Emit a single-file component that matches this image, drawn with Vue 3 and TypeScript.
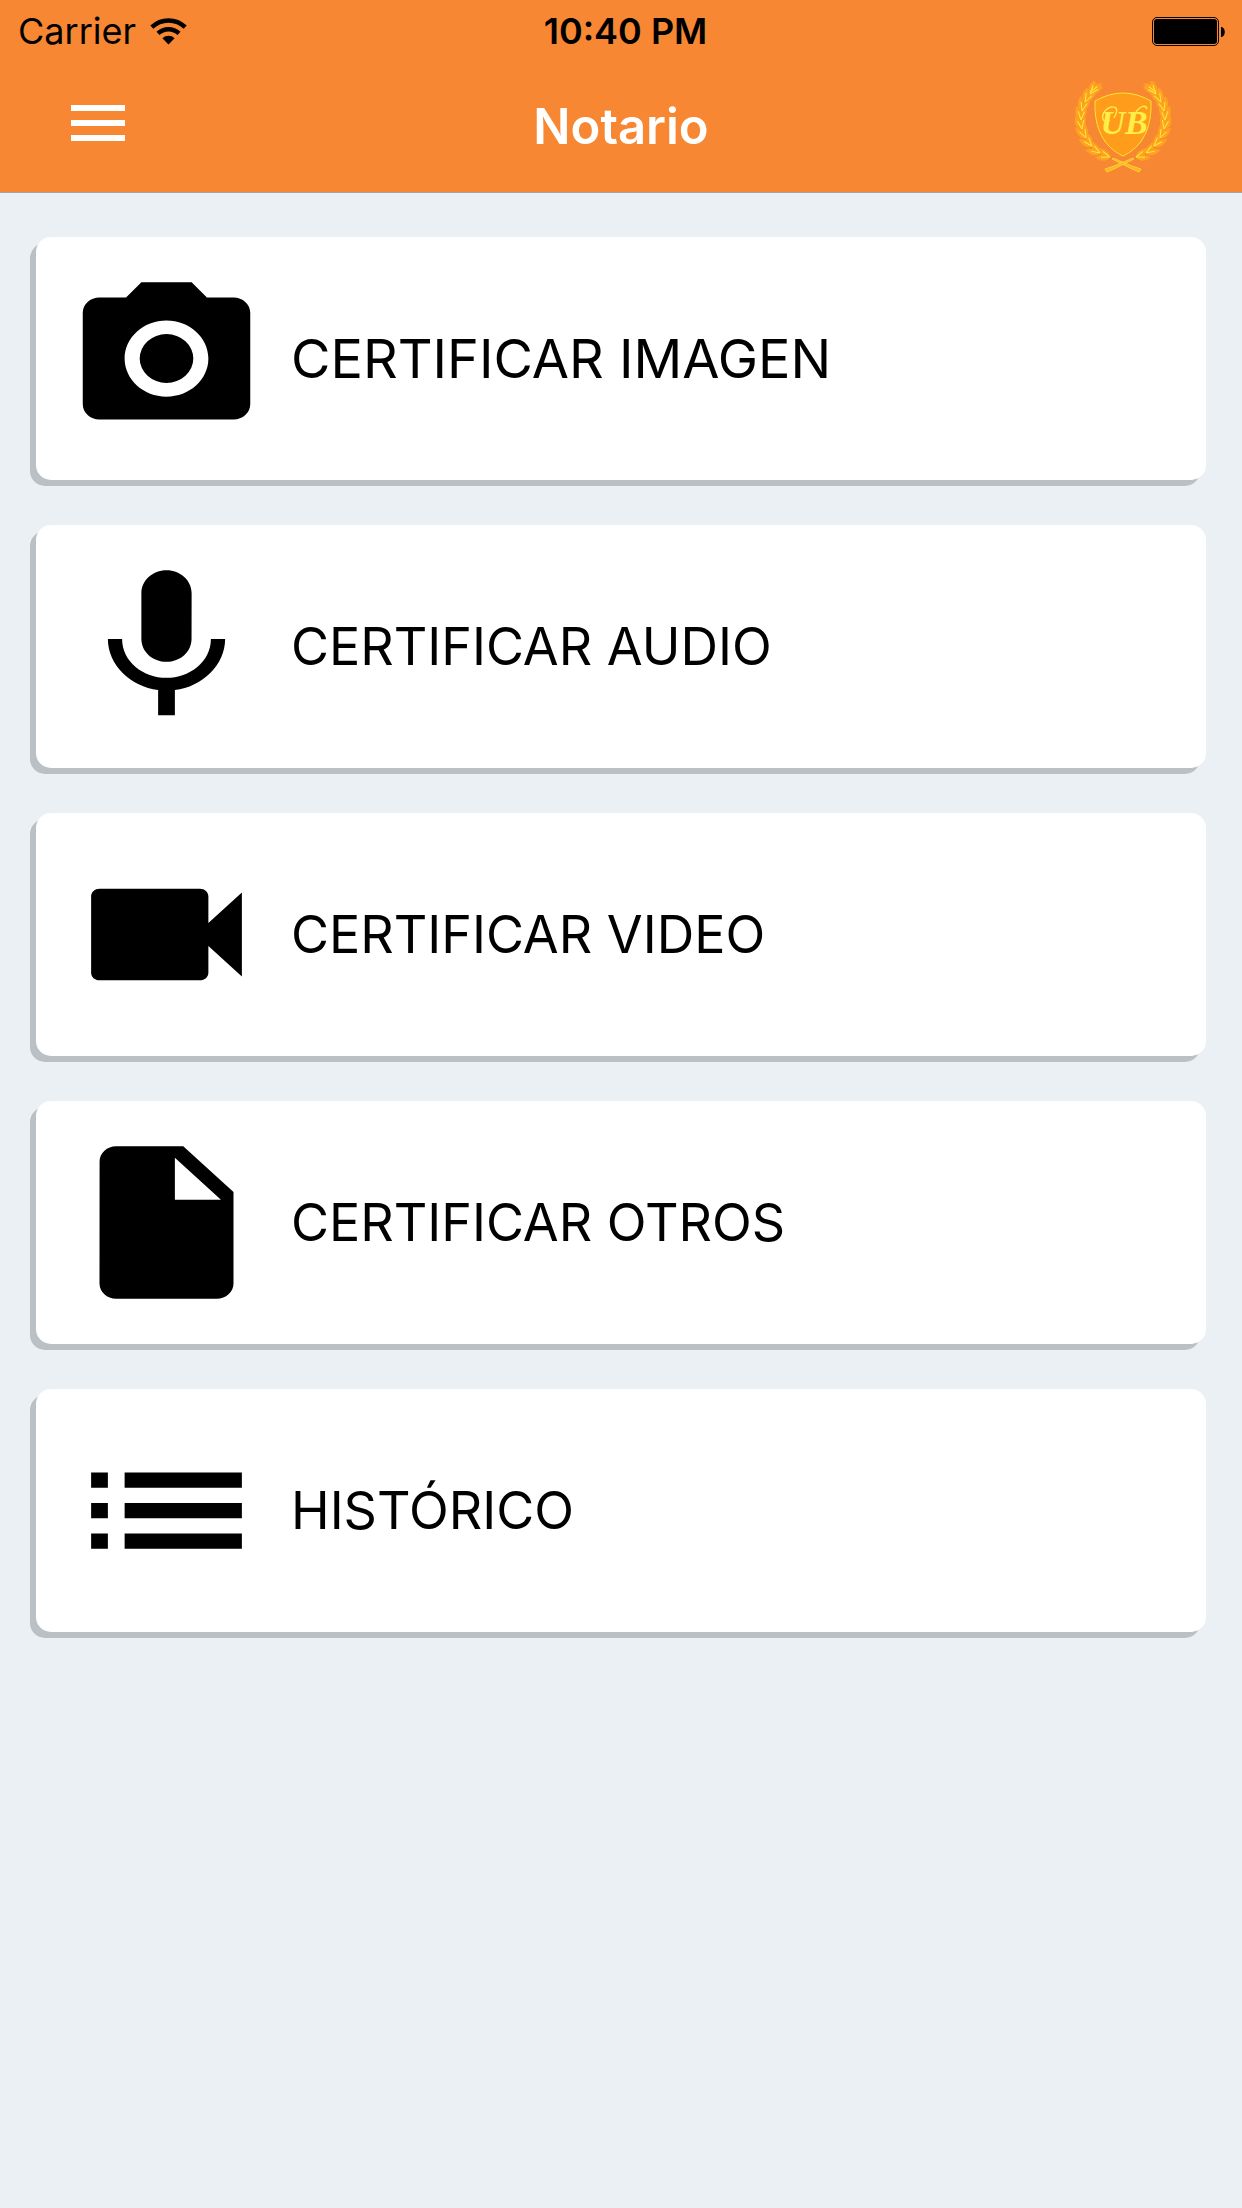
<script setup lang="ts">
interface MenuEntry {
  label: string
  icon: string
  large?: boolean
}

interface Leaf {
  x: number
  y: number
  angle: number
}

const entries: MenuEntry[] = [
  {
    label: 'CERTIFICAR IMAGEN',
    large: true,
    icon: 'M9 2L7.17 4H4c-1.1 0-2 .9-2 2v12c0 1.1.9 2 2 2h16c1.1 0 2-.9 2-2V6c0-1.1-.9-2-2-2h-3.17L15 2H9zm3 15c-2.76 0-5-2.24-5-5s2.24-5 5-5 5 2.24 5 5-2.24 5-5 5zm0-8.2a3.2 3.2 0 1 0 0 6.4a3.2 3.2 0 1 0 0-6.4z',
  },
  {
    label: 'CERTIFICAR AUDIO',
    icon: 'M12 14c1.66 0 2.99-1.34 2.99-3L15 5c0-1.66-1.34-3-3-3S9 3.34 9 5v6c0 1.66 1.34 3 3 3zm5.3-3c0 3-2.54 5.1-5.3 5.1S6.7 14 6.7 11H5c0 3.41 2.72 6.23 6 6.72V21h2v-3.28c3.28-.48 6-3.3 6-6.72h-1.7z',
  },
  {
    label: 'CERTIFICAR VIDEO',
    icon: 'M17 10.5V7c0-.55-.45-1-1-1H4c-.55 0-1 .45-1 1v10c0 .55.45 1 1 1h12c.55 0 1-.45 1-1v-3.5l4 4v-11l-4 4z',
  },
  {
    label: 'CERTIFICAR OTROS',
    icon: 'M6 2c-1.1 0-1.99.9-1.99 2L4 20c0 1.1.89 2 1.99 2H18c1.1 0 2-.9 2-2V8l-6-6H6zm7 7V3.5L18.5 9H13z',
  },
  {
    label: 'HISTÓRICO',
    icon: 'M3 13h2v-2H3v2zm0 4h2v-2H3v2zm0-8h2V7H3v2zm4 4h14v-2H7v2zm0 4h14v-2H7v2zM7 7v2h14V7H7z',
  },
]

// Stem of one laurel branch, from its tip down to the knot: x, y, direction of growth
const stem: [number, number, number][] = [
  [15, 13, -50],
  [10, 21, -62],
  [7, 30, -76],
  [6, 39, -88],
  [7, 48, -100],
  [11, 57, -116],
  [17, 65, -132],
  [25, 72, -148],
  [35, 76, -162],
]

const leaves: Leaf[] = stem.flatMap(([x, y, a]) => [
  { x, y, angle: a - 20 },
  { x, y, angle: a + 20 },
])
leaves.push({ x: 15, y: 11, angle: -36 })
</script>

<template>
  <div class="screen">
    <header class="top">
      <div class="status">
        <div class="carrier">
          <span>Carrier</span>
          <svg class="wifi" viewBox="0 0 37 27" aria-hidden="true">
            <path d="M1.8 9.2a24 24 0 0 1 33.4 0" fill="none" stroke="#000" stroke-width="4.4" />
            <path d="M8 15.4a15.2 15.2 0 0 1 21 0" fill="none" stroke="#000" stroke-width="4.4" />
            <path d="M12.4 20.3a8.8 8.8 0 0 1 12.2 0L18.5 26.6z" />
          </svg>
        </div>
        <time class="clock">10:40 PM</time>
        <svg class="battery" viewBox="0 0 73 29" aria-hidden="true">
          <rect x="0.5" y="0.5" width="66" height="28" rx="4.5" fill="none" stroke="#000" />
          <rect x="2" y="2" width="63" height="25" rx="3" />
          <path d="M69 10c5 0 5 10 0 10z" />
        </svg>
      </div>
      <div class="bar">
        <button class="menu" type="button" aria-label="Menú">
          <svg viewBox="0 0 54 36" aria-hidden="true">
            <path d="M0 0h54v6H0zM0 15h54v6H0zM0 30h54v6H0z" fill="#fff" />
          </svg>
        </button>
        <h1>Notario</h1>
        <svg class="crest" viewBox="0 0 96 92" aria-hidden="true">
          <g v-for="side in 2" :key="side" :transform="side === 2 ? 'translate(96 0) scale(-1 1)' : undefined">
            <path
              v-for="(leaf, i) in leaves"
              :key="i"
              d="M0 0C2-4.600 9-4.600 15 0C9 3.600 3 3.600 0 0z"
              fill="#fda321"
              :transform="`translate(${leaf.x} ${leaf.y}) rotate(${leaf.angle})`"
            />
            <path
              v-for="(leaf, i) in leaves"
              :key="`v${i}`"
              d="M0 0L9 0"
              stroke="#ffe93b"
              stroke-width="1"
              :transform="`translate(${leaf.x} ${leaf.y}) rotate(${leaf.angle})`"
            />
            <path d="M38 77L57 85L66 88L64 91L57 88L37 78z" fill="#ffb225" stroke="#ffe533" stroke-width="0.7" />
          </g>
          <path d="M20 20Q34 12 48 12Q62 12 76 20C77 48 67 66 48 75C29 66 19 48 20 20z" fill="#ff9c1b" stroke="#ffe52c" stroke-width="1" />
          <path d="M35 39C25 45 25 29 36 26C43 25 43 30 39 37M61 31C66 24 71 24 72 28" fill="none" stroke="#ffee45" stroke-width="1.4" />
          <text class="initials" x="49" y="53" text-anchor="middle">UB</text>
        </svg>
      </div>
    </header>

    <main class="list">
      <button v-for="entry in entries" :key="entry.label" class="card" type="button">
        <svg class="icon" viewBox="0 0 24 24" preserveAspectRatio="none" aria-hidden="true">
          <path :d="entry.icon" fill-rule="evenodd" />
        </svg>
        <span class="label" :class="{ large: entry.large }">{{ entry.label }}</span>
      </button>
    </main>
  </div>
</template>

<style>
body {
  margin: 0;
  background: #ebf0f4;
}
</style>

<style scoped>
.screen {
  min-height: 100vh;
  background: #ebf0f4;
  color: #000;
  font-family: Inter, "Liberation Sans", sans-serif;
}

.top {
  background: #f78733;
  border-bottom: 1px solid #a5a5a6;
}

.status {
  display: grid;
  grid-template-columns: 1fr auto 1fr;
  align-items: center;
  height: 62px;
  padding: 0 17px 0 18px;
  font-size: 36px;
  line-height: 62px;
}

.carrier {
  display: flex;
  align-items: center;
  gap: 14px;
}

.wifi {
  width: 37px;
  height: 27px;
}

.clock {
  padding-left: 8px;
  font-weight: 600;
}

.battery {
  justify-self: end;
  width: 73px;
  height: 29px;
}

.bar {
  display: grid;
  grid-template-columns: 1fr auto 1fr;
  align-items: center;
  height: 130px;
  padding: 0 71px;
}

.menu {
  justify-self: start;
  padding: 0 0 8px;
  border: 0;
  background: none;
}

.menu svg {
  display: block;
  width: 54px;
  height: 36px;
}

h1 {
  margin: 0;
  color: #fff;
  font-size: 49px;
  font-weight: 600;
  line-height: 60px;
}

.crest {
  justify-self: end;
  width: 96px;
  height: 92px;
}

.initials {
  fill: #ffee45;
  font-family: "Liberation Serif", serif;
  font-size: 34px;
  font-style: italic;
  font-weight: 700;
}

.list {
  display: flex;
  flex-direction: column;
  gap: 45px;
  padding: 44px 36px;
}

.card {
  display: flex;
  align-items: center;
  gap: 24px;
  padding: 30px;
  border: 0;
  border-radius: 15px;
  background: #fff;
  box-shadow: -6px 6px 0 #bbc0c4;
  color: inherit;
  font: inherit;
  text-align: left;
}

.icon {
  flex: none;
  width: 201px;
  height: 183px;
}

.label {
  font-size: 52px;
  line-height: 64px;
}

.label.large {
  font-size: 54px;
}
</style>
